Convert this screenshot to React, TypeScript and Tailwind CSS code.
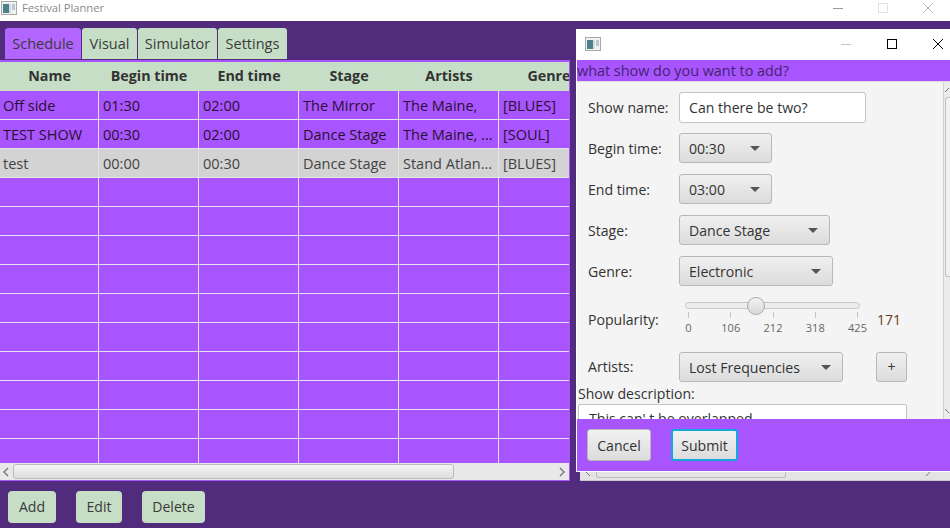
import React from 'react';

const rows = [
    ['Off side', '01:30', '02:00', 'The Mirror', 'The Maine,', '[BLUES]'],
    ['TEST SHOW', '00:30', '02:00', 'Dance Stage', 'The Maine, ...', '[SOUL]'],
    ['test', '00:00', '00:30', 'Dance Stage', 'Stand Atlan...', '[BLUES]'],
    ...Array.from({ length: 10 }, () => ['', '', '', '', '', '']),
];
const headers = ['Name', 'Begin time', 'End time', 'Stage', 'Artists', 'Genre'];
const ticks = ['0', '106', '212', '318', '425'];

const AppIcon = ({ className }: { className: string }) => (
    <svg viewBox="0 0 16 14" className={className}>
        <rect x="0.5" y="0.5" width="15" height="13" fill="#f2f2f2" stroke="#a8a8a8" />
        <rect x="2" y="3" width="6" height="9" fill="#4d7f8c" />
        <rect x="8" y="3" width="2" height="9" fill="#cfe0d8" />
        <rect x="11" y="3" width="3" height="6" fill="#b9c6d6" />
    </svg>
);

const WindowButtons = ({ dialog }: { dialog?: boolean }) => {
    const strong = dialog ? '#000000' : '#b8b8b8';
    return (
        <div className={`flex items-center ${dialog ? 'gap-[36px] pr-[7px]' : 'gap-[35px] pr-[17px] pb-[5px]'}`}>
            <svg width="10" height="10" viewBox="0 0 10 10">
                <line x1="0" y1="5.5" x2="10" y2="5.5" stroke={dialog ? '#c4c4c4' : '#9a9a9a'} />
            </svg>
            <svg width="10" height="10" viewBox="0 0 10 10">
                <rect x="0.5" y="0.5" width="9" height="9" fill="none" stroke={dialog ? '#000000' : '#e2e2e2'} />
            </svg>
            <svg width="10" height="10" viewBox="0 0 10 10">
                <path d="M0 0L10 10M10 0L0 10" stroke={strong} fill="none" />
            </svg>
        </div>
    );
};

const Combo = ({ value, width }: { value: string; width: string }) => (
    <div className={`${width} h-[30px] flex items-center justify-between pl-[9px] pr-[11px] rounded-[3px] border border-[#b8b8b8] bg-gradient-to-b from-[#f0f0f0] to-[#dcdcdc] text-[#333333]`}>
        <span className="pt-[1px]">{value}</span>
        <span className="w-0 h-0 border-l-[5px] border-r-[5px] border-t-[5px] border-l-transparent border-r-transparent border-t-[#555555]" />
    </div>
);

const FormRow = ({ label, children }: { label: string; children: React.ReactNode }) => (
    <div className="flex items-center h-[30px]">
        <span className="w-[91px] pt-[1px] text-[#333333]">{label}</span>
        {children}
    </div>
);

const TabItem = ({ label, width, active }: { label: string; width: string; active?: boolean }) => (
    <div className={`${width} h-[31px] flex items-center justify-center rounded-t-[3px] text-[14.5px] text-[#3a3a3a] ${active ? 'bg-[#b266ff]' : 'bg-[#c6dec6]'}`}>
        {label}
    </div>
);

const FooterButton = ({ label, focused }: { label: string; focused?: boolean }) => (
    <button className={`h-[32px] pt-[1px] rounded-[3px] text-[#333333] bg-gradient-to-b from-[#f2f2f2] to-[#dcdcdc] ${focused ? 'w-[67px] border-2 border-[#12a8dc]' : 'w-[64px] border border-[#b8b8b8]'}`}>
        {label}
    </button>
);

const ActionButton = ({ label, width }: { label: string; width: string }) => (
    <button className={`${width} h-[32px] rounded-[4px] bg-[#c6dec6] text-[#3a3a3a]`}>{label}</button>
);

const App: React.FC = () => {
    return (
        <div className="relative w-[950px] h-[528px] overflow-hidden bg-[#512b7c] font-['Open_Sans',sans-serif] text-[14.1px]">
            {/* Main window title */}
            <div className="h-[21px] bg-white flex items-center justify-between">
                <div className="flex items-center gap-[5px] pl-[1px] pb-[5px] text-[11.2px] text-[#8a8a8a]">
                    <AppIcon className="w-[16px] h-[14px]" />
                    <span>Festival Planner</span>
                </div>
                <WindowButtons />
            </div>

            {/* Tabs */}
            <div className="flex gap-[1px] pl-[5px] pt-[7px] h-[39px]">
                <TabItem label="Schedule" width="w-[76px]" active />
                <TabItem label="Visual" width="w-[55px]" />
                <TabItem label="Simulator" width="w-[79px]" />
                <TabItem label="Settings" width="w-[69px]" />
            </div>

            {/* Table */}
            <div className="w-[570px] h-[421px] border-t-2 border-r border-b border-[#a855ff] bg-[#a855ff] flex flex-col overflow-hidden">
                <div className="flex h-[29px] shrink-0 bg-[#c6dec6] font-bold text-[14.3px] text-[#333333] pb-[1px]">
                    {headers.map((h, i) => (
                        <div key={h} className={`${i === 0 ? 'w-[99px]' : 'w-[100px]'} shrink-0 flex items-center justify-center`}>{h}</div>
                    ))}
                </div>
                <div className="flex-1 overflow-hidden text-[14.5px]">
                    {rows.map((row, i) => (
                        <div key={i} className={`flex h-[29px] border-b ${i === 2 ? 'bg-[#d3d3d3] text-[#444444] border-[#e4e4e4]' : 'bg-[#a855ff] text-[#2a1030] border-[#e8e0f0]'}`}>
                            {row.map((cell, j) => (
                                <div key={j} className={`${j === 0 ? 'w-[99px] pl-[3px]' : 'w-[100px] pl-[4px]'} pt-[1px] shrink-0 flex items-center border-r whitespace-nowrap ${i === 2 ? 'border-[#e4e4e4]' : 'border-[#e8e0f0]'}`}>{cell}</div>
                            ))}
                        </div>
                    ))}
                </div>
                <div className="h-[17px] shrink-0 bg-[#e8e8e8] flex items-center justify-between pl-[1px] pr-[2px]">
                    <svg width="10" height="12" viewBox="0 0 10 12"><path d="M7 2L3 6L7 10" stroke="#777777" fill="none" strokeWidth="1.4" /></svg>
                    <div className="w-[441px] h-[15px] mr-auto ml-[2px] rounded-[3px] border border-[#bdbdbd] bg-gradient-to-b from-[#f4f4f4] to-[#dedede]" />
                    <svg width="10" height="12" viewBox="0 0 10 12"><path d="M3 2L7 6L3 10" stroke="#777777" fill="none" strokeWidth="1.4" /></svg>
                </div>
            </div>

            {/* Bottom buttons */}
            <div className="flex pl-[8px] pt-[10px] text-[#3a3a3a]">
                <ActionButton label="Add" width="w-[48px] mr-[20px]" />
                <ActionButton label="Edit" width="w-[46px] mr-[20px]" />
                <ActionButton label="Delete" width="w-[63px]" />
            </div>

            {/* Window behind the dialog */}
            <div className="absolute left-[580px] top-[472px] w-[370px] h-[9px] bg-[#e4e4e4] border-b border-[#c8c8c8] flex items-start pl-[6px] overflow-hidden">
                <svg width="6" height="5" viewBox="0 0 6 5"><path d="M0 0L4 4" stroke="#777777" fill="none" /></svg>
                <div className="ml-[4px] w-[190px] h-[6px] rounded-b-[3px] border border-t-0 border-[#bdbdbd]" />
                <svg width="6" height="5" viewBox="0 0 6 5" className="ml-[140px]"><path d="M0 4L4 0" stroke="#777777" fill="none" /></svg>
            </div>

            {/* Dialog */}
            <div className="absolute left-[576px] top-[29px] w-[374px] h-[443px] bg-white pl-[1px] pb-[1px] flex flex-col">
                <div className="h-[31px] shrink-0 flex items-center justify-between pl-[8px] pb-[2px]">
                    <AppIcon className="w-[16px] h-[14px]" />
                    <WindowButtons dialog />
                </div>
                <div className="h-[21px] shrink-0 bg-[#a855ff] text-[14.4px] text-[#45236e] flex items-center whitespace-nowrap">what show do you want to add?</div>
                <div className="flex-1 min-h-0 flex bg-[#f4f4f4] border-t border-[#dcdcdc] overflow-hidden">
                    <div className="flex-1 min-w-0 flex flex-col overflow-hidden">
                        <div className="pl-[11px] pt-[10px] flex flex-col gap-[11px] shrink-0">
                            <FormRow label="Show name:">
                                <div className="w-[187px] h-[31px] flex items-center pl-[9px] pt-[1px] bg-white rounded-[3px] border border-[#c4c4c4] text-[#333333]">Can there be two?</div>
                            </FormRow>
                            <FormRow label="Begin time:"><Combo value="00:30" width="w-[93px]" /></FormRow>
                            <FormRow label="End time:"><Combo value="03:00" width="w-[93px]" /></FormRow>
                            <FormRow label="Stage:"><Combo value="Dance Stage" width="w-[151px]" /></FormRow>
                            <FormRow label="Genre:"><Combo value="Electronic" width="w-[154px]" /></FormRow>
                        </div>
                        <div className="pl-[11px] mt-[15px] flex items-start h-[50px] shrink-0 text-[#333333]">
                            <span className="w-[91px] mt-[8px]">Popularity:</span>
                            <div className="w-[198px] shrink-0 pl-[6px]">
                                <div className="relative w-[175px] h-[7px] mt-[1px] rounded-full border border-[#c8c8c8] bg-[#ececec]">
                                    <div className="absolute left-[61px] top-[-6px] w-[18px] h-[18px] rounded-full border border-[#aaaaaa] bg-gradient-to-b from-[#f2f2f2] to-[#d8d8d8]" />
                                </div>
                                <div className="flex justify-between w-[170px] ml-[3px] mt-[3px]">
                                    {ticks.map((t) => (
                                        <div key={t} className="w-[1px] flex flex-col items-center">
                                            <div className="w-[1px] h-[6px] shrink-0 bg-[#c4c4c4]" />
                                            <span className="mt-[3px] text-[11px] leading-[14px] text-[#666666]">{t}</span>
                                        </div>
                                    ))}
                                </div>
                            </div>
                            <span className="mt-[8px] text-[#6b3a20]">171</span>
                        </div>
                        <div className="pl-[11px] mt-[1px] flex items-center h-[30px] shrink-0">
                            <span className="w-[91px] text-[#333333]">Artists:</span>
                            <Combo value="Lost Frequencies" width="w-[164px]" />
                            <div className="ml-[33px] w-[31px] h-[30px] flex items-center justify-center rounded-[3px] border border-[#b8b8b8] bg-gradient-to-b from-[#f0f0f0] to-[#dcdcdc] text-[#333333]">+</div>
                        </div>
                        <div className="pl-[1px] mt-[2px] text-[#333333] leading-[20px] shrink-0">Show description:</div>
                        <div className="ml-[1px] w-[329px] h-[40px] shrink-0 pl-[10px] pt-[3px] bg-white border border-[#c4c4c4] rounded-[2px] text-[#333333]">This can' t be overlapped</div>
                    </div>
                    {/* Dialog scrollbar */}
                    <div className="w-[7px] shrink-0 bg-[#ececec] border-l border-[#d0d0d0] flex flex-col pl-[1px]">
                        <svg width="6" height="5" viewBox="0 0 6 5" className="mt-[6px]"><path d="M0 4L4 0" stroke="#777777" fill="none" /></svg>
                        <div className="mt-[4px] h-[180px] shrink-0 rounded-l-[3px] border border-r-0 border-[#c0c0c0] bg-[#f2f2f2]" />
                        <svg width="6" height="5" viewBox="0 0 6 5" className="mt-auto mb-[5px]"><path d="M0 0L4 4" stroke="#777777" fill="none" /></svg>
                    </div>
                </div>
                <div className="h-[52px] shrink-0 bg-[#a855ff] flex items-center gap-[20px] pl-[10px]">
                    <FooterButton label="Cancel" />
                    <FooterButton label="Submit" focused />
                </div>
            </div>
        </div>
    );
};

export default App;
